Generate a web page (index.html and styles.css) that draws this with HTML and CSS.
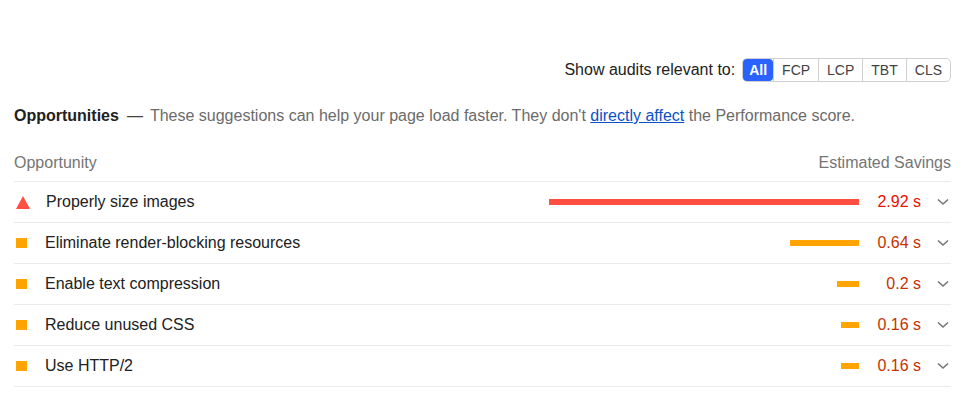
FILE: index.html
```html
<!DOCTYPE html>
<html>
<head>
<meta charset="utf-8">
<link rel="stylesheet" href="styles.css">
</head>
<body>
<div class="page">
  <div class="filter">
    <span class="filter-label">Show audits relevant to:</span>
    <div class="chips">
      <span class="chip chip-active">All</span>
      <span class="chip">FCP</span>
      <span class="chip">LCP</span>
      <span class="chip">TBT</span>
      <span class="chip">CLS</span>
    </div>
  </div>
  <div class="group-desc">
    <span class="group-title">Opportunities</span><span class="dash">—</span>These suggestions can help your page load faster. They don't <a class="link" href="#">directly affect</a> the Performance score.
  </div>
  <div class="table-head">
    <span>Opportunity</span>
    <span>Estimated Savings</span>
  </div>
  <div class="row">
    <span class="icon-fail"></span>
    <span class="title">Properly size images</span>
    <span class="bar bar-fail" style="width:310px"></span>
    <span class="value value-fail">2.92 s</span>
    <svg class="chev" width="14" height="10" viewBox="0 0 14 10"><path d="M2 2.5 L7 7 L12 2.5" fill="none" stroke="#757575" stroke-width="1.6"/></svg>
  </div>
  <div class="row">
    <span class="icon-avg"></span>
    <span class="title">Eliminate render-blocking resources</span>
    <span class="bar bar-avg" style="width:69px"></span>
    <span class="value value-avg">0.64 s</span>
    <svg class="chev" width="14" height="10" viewBox="0 0 14 10"><path d="M2 2.5 L7 7 L12 2.5" fill="none" stroke="#757575" stroke-width="1.6"/></svg>
  </div>
  <div class="row">
    <span class="icon-avg"></span>
    <span class="title">Enable text compression</span>
    <span class="bar bar-avg" style="width:22px"></span>
    <span class="value value-avg">0.2 s</span>
    <svg class="chev" width="14" height="10" viewBox="0 0 14 10"><path d="M2 2.5 L7 7 L12 2.5" fill="none" stroke="#757575" stroke-width="1.6"/></svg>
  </div>
  <div class="row">
    <span class="icon-avg"></span>
    <span class="title">Reduce unused CSS</span>
    <span class="bar bar-avg" style="width:18px"></span>
    <span class="value value-avg">0.16 s</span>
    <svg class="chev" width="14" height="10" viewBox="0 0 14 10"><path d="M2 2.5 L7 7 L12 2.5" fill="none" stroke="#757575" stroke-width="1.6"/></svg>
  </div>
  <div class="row">
    <span class="icon-avg"></span>
    <span class="title">Use HTTP/2</span>
    <span class="bar bar-avg" style="width:18px"></span>
    <span class="value value-avg">0.16 s</span>
    <svg class="chev" width="14" height="10" viewBox="0 0 14 10"><path d="M2 2.5 L7 7 L12 2.5" fill="none" stroke="#757575" stroke-width="1.6"/></svg>
  </div>
</div>
</body>
</html>
```
FILE: styles.css
```css
html, body {
  margin: 0;
  padding: 0;
  background: #ffffff;
}
.page {
  padding: 58px 13px 0 14px;
  font-family: "Liberation Sans", Arial, sans-serif;
  font-size: 16px;
  color: #212121;
}
.filter {
  display: flex;
  justify-content: flex-end;
  align-items: center;
  gap: 7px;
}
.filter-label {
  color: #212121;
}
.chips {
  display: flex;
  border: 1px solid #d0d0d0;
  border-radius: 5px;
  height: 22px;
  padding: 0;
}
.chip {
  display: flex;
  align-items: center;
  padding: 0 8px;
  font-size: 14px;
  color: #424242;
  border-left: 1px solid #d0d0d0;
}
.chip:first-child {
  border-left: none;
}
.chip-active {
  background: #2962ff;
  color: #ffffff;
  border-radius: 4px;
  padding: 0 6px;
  font-weight: bold;
}
.group-desc {
  margin-top: 24px;
  font-size: 16px;
  color: #6b6b6b;
  line-height: 20px;
}
.group-title {
  font-weight: bold;
  color: #212121;
}
.dash {
  margin: 0 7px 0 8px;
  color: #424242;
}
.link {
  color: #0c50c7;
  text-decoration: underline;
}
.table-head {
  display: flex;
  justify-content: space-between;
  margin-top: 27px;
  color: #757575;
  font-size: 16px;
  line-height: 20px;
  padding-bottom: 8px;
  border-bottom: 1px solid #ebebeb;
}
.row {
  display: flex;
  align-items: center;
  height: 40px;
  border-bottom: 1px solid #ebebeb;
}
.icon-fail {
  width: 0;
  height: 0;
  margin-left: 2px;
  border-left: 7px solid transparent;
  border-right: 7px solid transparent;
  border-bottom: 13px solid #ff4e42;
  margin-right: 16px;
}
.icon-avg {
  width: 11px;
  height: 10px;
  margin-left: 2px;
  background: #ffa400;
  margin-right: 18px;
}
.title {
  flex: 1;
}
.bar {
  height: 6px;
}
.bar-fail {
  background: #ff4e42;
}
.bar-avg {
  background: #ffa400;
}
.value {
  width: 62px;
  text-align: right;
  font-size: 16px;
}
.value-fail {
  color: #eb0f00;
}
.value-avg {
  color: #c33300;
}
.chev {
  margin-left: 15px;
  margin-right: 1px;
}
```
